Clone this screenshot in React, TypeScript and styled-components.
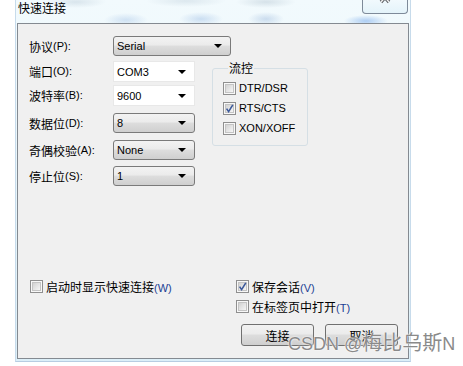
import React from 'react';
import styled, { createGlobalStyle } from 'styled-components';

const GlobalStyle = createGlobalStyle`
  html, body {
    margin: 0;
    padding: 0;
    background: #ffffff;
  }
  body {
    width: 463px;
    height: 366px;
    overflow: hidden;
    font-family: "Liberation Sans", "Noto Sans CJK SC", sans-serif;
  }
`;

const cjk = `"Noto Sans CJK SC", "Liberation Sans", sans-serif`;
const latin = `"Liberation Sans", "Noto Sans CJK SC", sans-serif`;

const Window = styled.div`
  position: relative;
  margin-left: 15px;
  width: 396px;
  height: 362px;
  display: flex;
  flex-direction: column;
  background:
    radial-gradient(ellipse 30px 6px at 60px 2px, rgba(170, 190, 205, 0.35), transparent),
    radial-gradient(ellipse 40px 6px at 170px 1px, rgba(170, 190, 205, 0.3), transparent),
    radial-gradient(ellipse 30px 6px at 250px 2px, rgba(160, 180, 195, 0.35), transparent),
    radial-gradient(ellipse 22px 7px at 110px 20px, rgba(130, 170, 220, 0.3), transparent),
    radial-gradient(ellipse 22px 7px at 185px 19px, rgba(130, 170, 220, 0.35), transparent),
    radial-gradient(ellipse 18px 7px at 250px 19px, rgba(130, 165, 210, 0.35), transparent),
    radial-gradient(ellipse 22px 6px at 350px 21px, rgba(90, 150, 230, 0.45), transparent),
    linear-gradient(180deg, #f2fafd 0%, #e6f5fb 60%, #dceff8 100%);
  border-left: 1px solid #c7dbeb;
  border-right: 1px solid #c7dbeb;
  border-bottom: 1px solid #b7cde2;
  box-sizing: border-box;
`;

const TitleBar = styled.div`
  height: 23px;
  display: flex;
  align-items: flex-start;
  padding-left: 2px;
  box-sizing: border-box;
`;

const Title = styled.span`
  font-family: ${cjk};
  font-size: 12px;
  line-height: 14px;
  margin-top: 1px;
  color: #000;
`;

const CloseButton = styled.div`
  margin-left: auto;
  margin-right: 2px;
  margin-top: -4px;
  width: 46px;
  height: 18px;
  box-sizing: border-box;
  border: 1px solid #7e8a99;
  border-top: none;
  border-radius: 0 0 4px 4px;
  background: linear-gradient(180deg, #f5fbfe, #e4f3fa);
  display: flex;
  justify-content: center;
  align-items: flex-start;
`;

const Panel = styled.div`
  flex: 1;
  margin: 0 1px 2px 1px;
  background: #f0f0f0;
  border: 1px solid #848a91;
  display: flex;
  flex-direction: column;
  padding: 12px 10px 12px 11px;
`;

const FormGrid = styled.div`
  display: grid;
  grid-template-columns: 84px 82px 17px 96px;
  grid-template-rows: 25px 24px 28px 27px 26px 19px;
  align-items: start;
`;

const Label = styled.div<{ $row: number }>`
  grid-column: 1;
  grid-row: ${(p) => p.$row};
  height: 20px;
  display: flex;
  align-items: center;
  font-family: ${cjk};
  font-size: 12px;
  color: #000;
  white-space: nowrap;
`;

const Combo = styled.div<{ $row: number; $editable?: boolean; $wide?: boolean }>`
  grid-column: ${(p) => (p.$wide ? '2 / 5' : '2')};
  grid-row: ${(p) => p.$row};
  width: ${(p) => (p.$wide ? '118px' : '82px')};
  height: ${(p) => (p.$editable ? '21px' : '20px')};
  box-sizing: border-box;
  display: flex;
  align-items: center;
  padding: 0 8px 0 3px;
  font-family: ${latin};
  font-size: 11px;
  color: #000;
  border-radius: ${(p) => (p.$editable ? '0' : '3px')};
  border: 1px solid ${(p) => (p.$editable ? '#e8e8e8' : '#7a7a7a')};
  background: ${(p) =>
    p.$editable ? '#ffffff' : 'linear-gradient(180deg, #f3f3f3 0%, #ebebeb 45%, #dddddd 50%, #cfcfcf 100%)'};
`;

const ComboText = styled.span`
  flex: 1;
`;

const Arrow = styled.span`
  width: 0;
  height: 0;
  border-left: 4px solid transparent;
  border-right: 4px solid transparent;
  border-top: 4px solid #000;
`;

const Group = styled.fieldset`
  grid-column: 4;
  grid-row: 2 / 6;
  margin: 1px 0 0 0;
  width: 96px;
  box-sizing: border-box;
  border: 1px solid #d5dfe5;
  border-radius: 3px;
  padding: 4px 4px 7px 10px;
  display: flex;
  flex-direction: column;
`;

const Legend = styled.legend`
  font-family: ${cjk};
  font-size: 12px;
  line-height: 12px;
  padding: 0 1px;
  margin-left: 5px;
  color: #000;
`;

const CheckRow = styled.label`
  height: 20px;
  display: flex;
  align-items: center;
  gap: 3px;
  font-family: ${cjk};
  font-size: 12px;
  color: #000;
  white-space: nowrap;
`;

const LatinText = styled.span`
  font-family: ${latin};
  font-size: 11px;
`;

const Mnemonic = styled.span<{ $blue?: boolean }>`
  font-family: ${latin};
  font-size: 11px;
  color: ${(p) => (p.$blue ? '#1c3f94' : '#000')};
`;

const Box = styled.span`
  width: 13px;
  height: 13px;
  box-sizing: border-box;
  border: 1px solid #8f8f8f;
  background: #f8f8f8;
  padding: 1px;
  display: flex;
  flex-shrink: 0;
`;

const BoxInner = styled.span`
  flex: 1;
  background: linear-gradient(135deg, #d2d2d2 0%, #e6e6e6 55%, #f6f6f6 100%);
  border: 1px solid #c4c4c4;
  position: relative;
`;

const Spacer = styled.div`
  flex: 1;
`;

const Bottom = styled.div`
  display: grid;
  grid-template-columns: 206px 1fr;
  align-items: start;
  padding-left: 1px;
`;

const RightColumn = styled.div`
  display: flex;
  flex-direction: column;
`;

const Buttons = styled.div`
  display: flex;
  gap: 11px;
  margin: 8px 0 0 5px;
`;

const Button = styled.div`
  width: 73px;
  height: 22px;
  box-sizing: border-box;
  border: 1px solid #707070;
  border-radius: 3px;
  background: linear-gradient(180deg, #f2f2f2 0%, #ebebeb 45%, #dddddd 50%, #cfcfcf 100%);
  display: flex;
  align-items: center;
  justify-content: center;
  font-family: ${cjk};
  font-size: 12px;
  color: #000;
`;

const Watermark = styled.div`
  position: absolute;
  left: 272px;
  top: 330px;
  font-family: ${latin};
  font-size: 18px;
  line-height: 24px;
  color: #8a8a8a;
  white-space: nowrap;
  text-shadow: 0 0 2px #fff, 0 0 1px #fff;
  pointer-events: none;
`;

const WatermarkCjk = styled.span`
  font-family: ${cjk};
  font-size: 20px;
`;

const CheckBox = ({ checked }: { checked?: boolean }) => (
  <Box>
    <BoxInner>
      {checked && (
        <svg
          width="11"
          height="11"
          viewBox="0 0 11 11"
          style={{ position: 'absolute', left: -2, top: -2 }}
        >
          <path d="M2.6 5.6 L4.6 8.6 L8.8 1.8" fill="none" stroke="#3d5a9b" strokeWidth="1.6" />
        </svg>
      )}
    </BoxInner>
  </Box>
);

const rows = [
  { label: '协议', key: '(P):', value: 'Serial', wide: true },
  { label: '端口', key: '(O):', value: 'COM3', editable: true },
  { label: '波特率', key: '(B):', value: '9600', editable: true },
  { label: '数据位', key: '(D):', value: '8' },
  { label: '奇偶校验', key: '(A):', value: 'None' },
  { label: '停止位', key: '(S):', value: '1' },
];

const flow = [
  { text: 'DTR/DSR', checked: false },
  { text: 'RTS/CTS', checked: true },
  { text: 'XON/XOFF', checked: false },
];

const App = () => {
  return (
    <>
      <GlobalStyle />
      <Window>
        <TitleBar>
          <Title>快速连接</Title>
          <CloseButton>
            <svg width="14" height="10" viewBox="0 0 14 10">
              <path d="M3 -3 L11 6 M11 -3 L3 6" fill="none" stroke="#5e6166" strokeWidth="3.4" />
              <path d="M3 -3 L11 6 M11 -3 L3 6" fill="none" stroke="#f2f2f2" strokeWidth="1.4" />
            </svg>
          </CloseButton>
        </TitleBar>
        <Panel>
          <FormGrid>
            {rows.map((r, i) => (
              <React.Fragment key={r.label}>
                <Label $row={i + 1}>
                  {r.label}
                  <Mnemonic>{r.key}</Mnemonic>
                </Label>
                <Combo $row={i + 1} $editable={r.editable} $wide={r.wide}>
                  <ComboText>{r.value}</ComboText>
                  <Arrow />
                </Combo>
              </React.Fragment>
            ))}
            <Group>
              <Legend>流控</Legend>
              {flow.map((f) => (
                <CheckRow key={f.text}>
                  <CheckBox checked={f.checked} />
                  <LatinText>{f.text}</LatinText>
                </CheckRow>
              ))}
            </Group>
          </FormGrid>
          <Spacer />
          <Bottom>
            <CheckRow>
              <CheckBox />
              <span>
                启动时显示快速连接<Mnemonic $blue>(W)</Mnemonic>
              </span>
            </CheckRow>
            <RightColumn>
              <CheckRow>
                <CheckBox checked />
                <span>
                  保存会话<Mnemonic $blue>(V)</Mnemonic>
                </span>
              </CheckRow>
              <CheckRow>
                <CheckBox />
                <span>
                  在标签页中打开<Mnemonic $blue>(T)</Mnemonic>
                </span>
              </CheckRow>
              <Buttons>
                <Button>连接</Button>
                <Button>取消</Button>
              </Buttons>
            </RightColumn>
          </Bottom>
        </Panel>
        <Watermark>
          CSDN @<WatermarkCjk>梅比乌斯</WatermarkCjk>N
        </Watermark>
      </Window>
    </>
  );
};

export default App;
